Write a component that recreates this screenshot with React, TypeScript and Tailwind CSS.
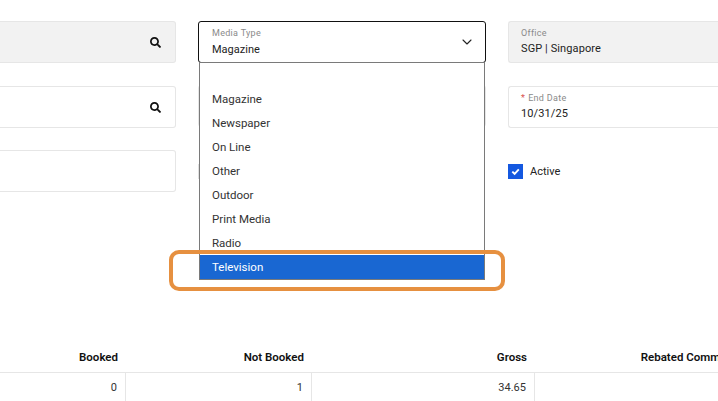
import { ChevronDown } from "lucide-react";
import { FaSearch } from "react-icons/fa";

const OPTIONS = ["", "Magazine", "Newspaper", "On Line", "Other", "Outdoor", "Print Media", "Radio"];

function LookupField({ disabled }: { disabled?: boolean }) {
  return (
    <div
      className={`h-[42px] rounded-r-[3px] border border-l-0 border-[#e6e6e6] flex items-center justify-end pr-[14px] ${
        disabled ? "bg-[#f2f2f2]" : "bg-white"
      }`}
    >
      <FaSearch size={11} className="text-[#111]" />
    </div>
  );
}

function TextField({ label, value, required, disabled }: { label: string; value: string; required?: boolean; disabled?: boolean }) {
  return (
    <div
      className={`h-[42px] rounded-l-[3px] border border-r-0 border-[#e6e6e6] pl-[12px] pt-[6px] ${
        disabled ? "bg-[#f2f2f2]" : "bg-white"
      }`}
    >
      <div className="text-[9px] leading-[11px] tracking-[0.3px] text-[#8a8a8a]">
        {required && <span className="text-[#d9534f] mr-[3px]">*</span>}
        {label}
      </div>
      <div className="text-[11px] leading-[19px] tracking-[0.1px] text-[#222]">{value}</div>
    </div>
  );
}

function MediaTypeSelect() {
  return (
    <div className="relative">
      <div className="h-[42px] rounded-[3px] border border-[#111] bg-white pl-[13px] pt-[6px] relative">
        <div className="text-[9px] leading-[11px] tracking-[0.3px] text-[#8a8a8a]">Media Type</div>
        <div className="text-[11px] leading-[21px] text-[#222]">Magazine</div>
        <ChevronDown size={16} strokeWidth={1.6} className="absolute right-[10px] top-[12px] text-[#222]" />
      </div>
      <ul className="absolute left-px right-px top-[41px] z-10 border border-[#7a7a7a] bg-white text-[11.5px] text-[#333]">
        {OPTIONS.map((o) => (
          <li key={o} className="h-[24px] leading-[25px] pl-[12px]">
            {o}
          </li>
        ))}
        <li className="h-[24px] leading-[25px] pl-[12px] bg-[#1967d2] text-white">Television</li>
      </ul>
    </div>
  );
}

function ActiveCheck() {
  return (
    <div className="h-[42px] flex items-center gap-[7px] -mt-px">
      <span className="w-[15px] h-[15px] bg-[#1458e0] flex items-center justify-center">
        <svg width="11" height="11" viewBox="0 0 11 11" fill="none">
          <path d="M2.3 5.6 4.6 7.8 8.8 3.4" stroke="#fff" strokeWidth="1.9" />
        </svg>
      </span>
      <span className="text-[11px] pt-[2px] text-[#222]">Active</span>
    </div>
  );
}

export default function App() {
  return (
    <div className="relative w-[718px] h-[401px] overflow-hidden bg-white font-['Roboto',sans-serif]">
      <div className="pt-[21px] grid grid-cols-[176px_288px_211px] gap-x-[22px] gap-y-[23px]">
        <LookupField disabled />
        <MediaTypeSelect />
        <TextField label="Office" value="SGP | Singapore" disabled />

        <LookupField />
        <div className="h-[42px] rounded-[3px] border border-[#e6e6e6] -mt-px" />
        <TextField label="End Date" value="10/31/25" required />

        <div className="h-[42px] rounded-r-[3px] border border-l-0 border-[#e6e6e6] -mt-px" />
        {/* unchecked box, almost all of it under the open list */}
        <div className="h-[42px] flex items-center -mt-px">
          <span className="w-[15px] h-[15px] border border-[#e0e0e0]" />
        </div>
        <ActiveCheck />
      </div>

      <div className="absolute left-0 top-[342px] w-[770px]">
        <div className="h-[31px] pt-[2px] grid grid-cols-[126px_186px_223px_224px] items-center text-[11.5px] font-semibold text-[#111] border-b border-[#e6e6e6] text-right">
          <div className="pr-[8px]">Booked</div>
          <div className="pr-[8px]">Not Booked</div>
          <div className="pr-[8px]">Gross</div>
          <div className="pr-[8px] whitespace-nowrap">Rebated Commission</div>
        </div>
        <div className="h-[29px] grid grid-cols-[126px_186px_223px_224px] items-center text-[11px] text-[#333] text-right">
          <div className="h-full pt-px flex items-center justify-end pr-[8px] border-r border-[#e6e6e6]">0</div>
          <div className="h-full pt-px flex items-center justify-end pr-[8px] border-r border-[#e6e6e6]">1</div>
          <div className="h-full pt-px flex items-center justify-end pr-[8px] border-r border-[#e6e6e6]">34.65</div>
          <div />
        </div>
      </div>

      {/* callout round the Television option */}
      <div className="absolute left-[169px] top-[250px] w-[336px] h-[41px] z-20 rounded-[10px] border-[4px] border-[#e69040]" />
    </div>
  );
}
